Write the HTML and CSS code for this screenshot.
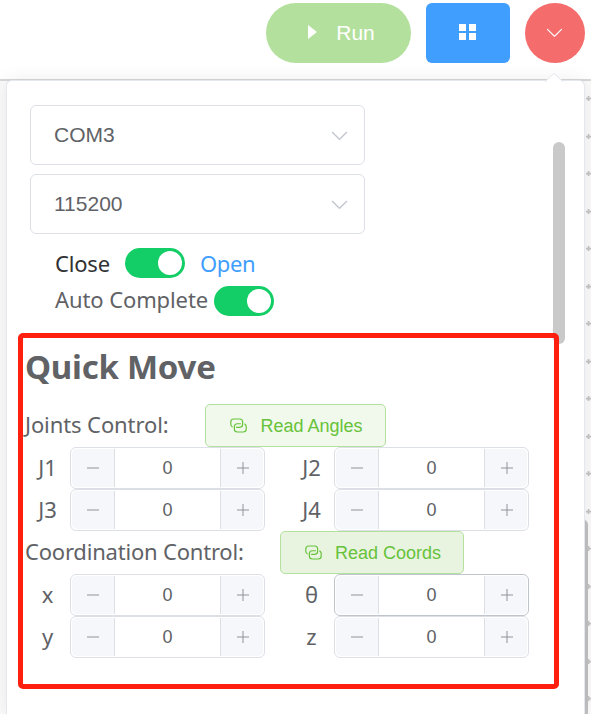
FILE: index.html
```html
<!DOCTYPE html>
<html lang="en">
<head>
<meta charset="utf-8">
<title>Quick Move</title>
<link rel="stylesheet" href="styles.css">
</head>
<body>
<svg class="defs" aria-hidden="true">
  <symbol id="arrow" viewBox="0 0 1024 1024"><path d="M831.872 340.864 512 652.672 192.128 340.864a30.592 30.592 0 0 0-42.752 0 29.12 29.12 0 0 0 0 41.6L489.664 714.24a32 32 0 0 0 44.672 0l340.288-331.712a29.12 29.12 0 0 0 0-41.728 30.592 30.592 0 0 0-42.752 0z"/></symbol>
  <symbol id="link" viewBox="0 0 1024 1024"><path d="M640 384v64H448a128 128 0 0 0-128 128v128a128 128 0 0 0 128 128h320a128 128 0 0 0 128-128V576a128 128 0 0 0-64-110.848V394.88c74.56 26.368 128 97.472 128 181.056v128a192 192 0 0 1-192 192H448a192 192 0 0 1-192-192V576a192 192 0 0 1 192-192h192z"/><path d="M384 640v-64h192a128 128 0 0 0 128-128V320a128 128 0 0 0-128-128H256a128 128 0 0 0-128 128v128a128 128 0 0 0 64 110.848v70.272A192.064 192.064 0 0 1 64 448V320a192 192 0 0 1 192-192h320a192 192 0 0 1 192 192v128a192 192 0 0 1-192 192H384z"/></symbol>
  <symbol id="minus" viewBox="0 0 12 12"><path d="M0 5.5h12v1H0z"/></symbol>
  <symbol id="plus" viewBox="0 0 12 12"><path d="M0 5.5h12v1H0zM5.5 0h1v12h-1z"/></symbol>
</svg>
<header class="toolbar">
  <button class="run"><svg width="9" height="14" viewBox="0 0 9 14"><path d="M0 0v14l9-7z"/></svg><span>Run</span></button>
  <button class="grid-btn"><svg width="17" height="16" viewBox="0 0 17 16"><path d="M0 0h7v7H0zM10 0h7v7h-7zM0 9h7v7H0zM10 9h7v7h-7z"/></svg></button>
  <button class="more"><svg width="21" height="21"><use href="#arrow"/></svg></button>
</header>
<main class="canvas"><div class="canvas-scroll"></div></main>
<div class="popover">
  <div class="tip"></div>
  <div class="scrollbar"></div>
  <div class="select"><span>COM3</span><svg width="21" height="21"><use href="#arrow"/></svg></div>
  <div class="select"><span>115200</span><svg width="21" height="21"><use href="#arrow"/></svg></div>
  <div class="switch-row"><span class="off">Close</span><i class="switch"></i><span class="on">Open</span></div>
  <div class="switch-row auto"><span class="label">Auto Complete</span><i class="switch"></i></div>
  <section class="quick">
    <h2>Quick Move</h2>
    <div class="title-row"><span class="joints">Joints Control:</span><button class="read angles"><svg width="19" height="19"><use href="#link"/></svg><span>Read Angles</span></button></div>
    <div class="fields">
      <label>J1</label><div class="number"><b><svg><use href="#minus"/></svg></b><span>0</span><b><svg><use href="#plus"/></svg></b></div>
      <label class="second">J2</label><div class="number"><b><svg><use href="#minus"/></svg></b><span>0</span><b><svg><use href="#plus"/></svg></b></div>
      <label>J3</label><div class="number"><b><svg><use href="#minus"/></svg></b><span>0</span><b><svg><use href="#plus"/></svg></b></div>
      <label class="second">J4</label><div class="number"><b><svg><use href="#minus"/></svg></b><span>0</span><b><svg><use href="#plus"/></svg></b></div>
    </div>
    <div class="title-row"><span class="coordination">Coordination Control:</span><button class="read coords"><svg width="19" height="19"><use href="#link"/></svg><span>Read Coords</span></button></div>
    <div class="fields">
      <label>x</label><div class="number"><b><svg><use href="#minus"/></svg></b><span>0</span><b><svg><use href="#plus"/></svg></b></div>
      <label class="second">θ</label><div class="number hover"><b><svg><use href="#minus"/></svg></b><span>0</span><b><svg><use href="#plus"/></svg></b></div>
      <label>y</label><div class="number"><b><svg><use href="#minus"/></svg></b><span>0</span><b><svg><use href="#plus"/></svg></b></div>
      <label class="second">z</label><div class="number"><b><svg><use href="#minus"/></svg></b><span>0</span><b><svg><use href="#plus"/></svg></b></div>
    </div>
  </section>
</div>
</body>
</html>
```
FILE: styles.css
```css
* { box-sizing: border-box; }
body {
  margin: 0;
  width: 591px;
  height: 714px;
  overflow: hidden;
  position: relative;
  display: flex;
  flex-direction: column;
  background: #fff;
  color: #606266;
  font-family: "Noto Sans", sans-serif;
  font-size: 22px;
}
svg { fill: currentColor; display: block; flex: none; }
.defs { position: absolute; width: 0; height: 0; }
button { border: 0; padding: 0; margin: 0; display: flex; align-items: center; justify-content: center; font-family: "Liberation Sans", sans-serif; color: #fff; }

.toolbar { height: 81px; padding: 3px 6px 0 0; display: flex; justify-content: flex-end; gap: 15px; border-bottom: 2px solid #d8d8d8; }
.toolbar button { height: 60px; }
.run { width: 145px; border-radius: 30px; background: #b3e19d; gap: 19px; font-size: 21px; padding-left: 6px; }
.run svg { margin-top: -2px; }
.grid-btn { width: 84px; border-radius: 6px; background: #409eff; padding: 0 1px 2px 0; }
.more { width: 60px; border-radius: 50%; background: #f56c6c; padding: 0 1px 1px 0; }

.canvas {
  flex: 1;
  display: flex;
  justify-content: flex-end;
  background: url("data:image/svg+xml,%3Csvg xmlns='http://www.w3.org/2000/svg' width='37.5' height='37.5'%3E%3Cpath d='M2.5 0v5M0 2.5h5' stroke='%23c4c4c4' stroke-width='1.7'/%3E%3C/svg%3E") 586px 15.2px / 37.5px 37.5px #fafafa;
}
.canvas-scroll { width: 12px; margin: 438px 3px 0 0; border-radius: 6px 6px 0 0; background: #c1c1c1; }

.popover {
  position: absolute;
  left: 6px;
  top: 80px;
  width: 579px;
  height: 634px;
  padding: 24px 0 0 11px;
  background: #fff;
  border: 1px solid #e4e7ed;
  border-bottom: 0;
  border-radius: 6px 6px 0 0;
  box-shadow: 0 0 18px rgba(0,0,0,.08);
}
.tip { position: absolute; left: 540px; top: -6px; width: 14px; height: 14px; background: #fff; border: 1px solid #e4e7ed; border-right-color: transparent; border-bottom-color: transparent; border-radius: 3px 0 0; transform: rotate(45deg); }
.scrollbar { position: absolute; left: 546px; top: 61px; width: 12px; height: 202px; border-radius: 6px; background: #c9c9c9; }
.select { width: 335px; height: 60px; margin: 0 0 9px 12px; padding: 0 14px 0 23px; border: 1px solid #dcdfe6; border-radius: 6px; display: flex; align-items: center; justify-content: space-between; font: 21px "Liberation Sans", sans-serif; }
.select svg { color: #c0c4cc; stroke: currentColor; stroke-width: 12px; }
.switch-row { display: flex; align-items: center; height: 30px; margin: 14px 0 0 37px; }
.switch-row.auto { margin-top: 8px; }
.switch-row span { position: relative; white-space: nowrap; }
.off { width: 70px; color: #303133; letter-spacing: -.2px; }
.on { margin-left: 15px; color: #409eff; letter-spacing: -.4px; }
.switch-row .label { width: 159px; top: -2px; letter-spacing: -.1px; }
.switch { width: 60px; height: 30px; padding: 3px; border-radius: 15px; background: #13ce66; display: flex; justify-content: flex-end; }
.switch::after { content: ""; width: 24px; height: 24px; border-radius: 50%; background: #fff; }

.quick { position: relative; width: 541px; height: 356px; margin-top: 17px; padding-left: 2px; border: 5px solid #ff1f0f; border-radius: 5px; }
h2 { margin: 0; height: 66px; line-height: 57px; font-size: 33px; font-weight: 700; letter-spacing: -.25px; }
.title-row { display: flex; height: 43px; line-height: 40px; white-space: nowrap; }
.joints { width: 180px; letter-spacing: -.1px; }
.coordination { width: 255px; letter-spacing: -.2px; }
.fields + .title-row { line-height: 41px; }
.read { height: 43px; border: 1px solid #b3e19d; border-radius: 5px; color: #67c23a; background: #f0f9eb; font-size: 18px; gap: 12px; padding-left: 1px; }
.read svg { margin-top: -1px; }
.read span { padding-top: 1px; }
.angles { width: 181px; }
.coords { width: 184px; background: #e8f4e0; }
.fields { display: grid; grid-template-columns: 45px 195px 69px 195px; grid-auto-rows: 42px; }
.fields label { text-align: center; line-height: 41px; }
.fields .second { padding-left: 24px; }
.number { display: flex; border: 1px solid #dcdfe6; border-radius: 6px; padding: 1px; font: 18px "Liberation Sans", sans-serif; }
.number.hover { border-color: #c0c4cc; }
.number b { width: 43px; background: #f5f7fa; display: flex; align-items: center; justify-content: center; color: #909399; }
.number b svg { width: 12px; height: 12px; }
.number b:first-child { border-right: 1px solid #dcdfe6; border-radius: 5px 0 0 5px; }
.number b:last-child { border-left: 1px solid #dcdfe6; border-radius: 0 5px 5px 0; padding-left: 1px; }
.number span { flex: 1; display: flex; align-items: center; justify-content: center; }
```
